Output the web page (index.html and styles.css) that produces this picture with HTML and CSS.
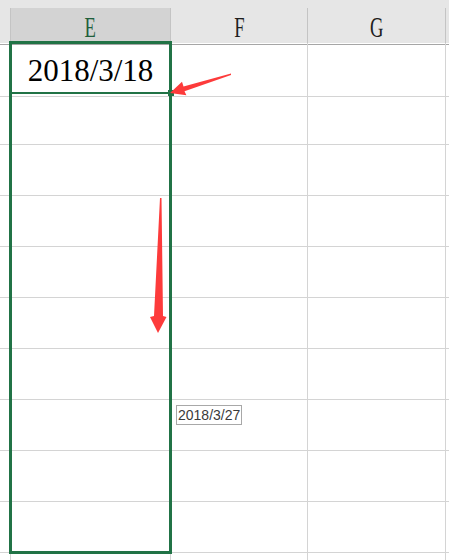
FILE: index.html
```html
<!DOCTYPE html>
<html lang="en">
<head>
  <meta charset="UTF-8" />
  <meta name="viewport" content="width=device-width, initial-scale=1.0" />
  <title>Sheet</title>
  <link rel="stylesheet" href="styles.css">
</head>
<body>
  <div class="sheet">
    <div class="top-strip"></div>
    <div class="row header">
      <div class="cell stub"></div>
      <div class="cell col active"><span class="letter">E</span></div>
      <div class="cell col"><span class="letter">F</span></div>
      <div class="cell col"><span class="letter">G</span></div>
      <div class="cell rest"></div>
    </div>
    <div class="body">
      <div class="row"><div class="cell stub"></div><div class="cell date">2018/3/18</div><div class="cell"></div><div class="cell"></div><div class="cell rest"></div></div>
      <div class="row"><div class="cell stub"></div><div class="cell"></div><div class="cell"></div><div class="cell"></div><div class="cell rest"></div></div>
      <div class="row"><div class="cell stub"></div><div class="cell"></div><div class="cell"></div><div class="cell"></div><div class="cell rest"></div></div>
      <div class="row"><div class="cell stub"></div><div class="cell"></div><div class="cell"></div><div class="cell"></div><div class="cell rest"></div></div>
      <div class="row"><div class="cell stub"></div><div class="cell"></div><div class="cell"></div><div class="cell"></div><div class="cell rest"></div></div>
      <div class="row"><div class="cell stub"></div><div class="cell"></div><div class="cell"></div><div class="cell"></div><div class="cell rest"></div></div>
      <div class="row"><div class="cell stub"></div><div class="cell"></div><div class="cell"></div><div class="cell"></div><div class="cell rest"></div></div>
      <div class="row"><div class="cell stub"></div><div class="cell"></div><div class="cell"></div><div class="cell"></div><div class="cell rest"></div></div>
      <div class="row"><div class="cell stub"></div><div class="cell"></div><div class="cell"></div><div class="cell"></div><div class="cell rest"></div></div>
      <div class="row"><div class="cell stub"></div><div class="cell"></div><div class="cell"></div><div class="cell"></div><div class="cell rest"></div></div>
      <div class="row"><div class="cell stub"></div><div class="cell"></div><div class="cell"></div><div class="cell"></div><div class="cell rest"></div></div>
    </div>

    <!-- selection box over column E -->
    <div class="selection"></div>
    <div class="active-line"></div>
    <div class="fill-handle"></div>

    <div class="tooltip">2018/3/27</div>

    <svg class="arrows" width="449" height="560" viewBox="0 0 449 560">
      <polygon points="231,73.5 183.5,86.5 182,81.8 170,93 186.4,95.2 184.5,91.3 231,75" />
      <polygon points="160,198 161.5,198 163,316 166.5,317 158,333 150,317 154,316" />
    </svg>
  </div>
</body>
</html>
```

FILE: styles.css
```css
body {
  margin: 0;
  background: #fff;
  overflow: hidden;
  font-family: "Liberation Serif", serif;
}
.sheet {
  position: relative;
  width: 449px;
  height: 560px;
  overflow: hidden;
}
.top-strip {
  height: 8px;
  background: #e6e6e6;
}
.row {
  display: grid;
  grid-template-columns: 11px 160px 137px 138px 1fr;
  height: 51px;
}
.cell {
  box-sizing: border-box;
  border-right: 1px solid #d4d4d4;
  border-bottom: 1px solid #d4d4d4;
}
.cell.rest {
  border-right: none;
}
.header {
  height: 35px;
  background: #e6e6e6;
}
.header .cell {
  border-right: 1px solid #c4c4c4;
  border-bottom: 1px solid #a6a6a6;
  text-align: center;
  line-height: 34px;
  padding-top: 2px;
  font-size: 30px;
  color: #1e1e1e;
}
.header .cell.rest {
  border-right: none;
}
.header .active {
  background: #d3d3d3;
  color: #1f5f3c;
}
.letter {
  display: inline-block;
  transform: scaleX(0.62);
}
.date {
  text-align: center;
  font-size: 31px;
  line-height: 50px;
  padding-top: 3px;
  color: #000;
}
.selection {
  position: absolute;
  left: 9px;
  top: 41px;
  width: 163px;
  height: 513px;
  box-sizing: border-box;
  border: 3px solid #217346;
}
.active-line {
  position: absolute;
  left: 10px;
  top: 92px;
  width: 160px;
  height: 2px;
  background: #217346;
}
.fill-handle {
  position: absolute;
  left: 168px;
  top: 90px;
  width: 6px;
  height: 6px;
  background: #217346;
}
.tooltip {
  position: absolute;
  left: 176px;
  top: 405px;
  height: 20px;
  box-sizing: border-box;
  padding: 0 1px;
  border: 1px solid #a8a8a8;
  background: #fff;
  font-family: "Liberation Sans", sans-serif;
  font-size: 14px;
  line-height: 18px;
  color: #3a3a3a;
}
.arrows {
  position: absolute;
  left: 0;
  top: 0;
  pointer-events: none;
}
.arrows polygon {
  fill: #fd3b3b;
}
```
